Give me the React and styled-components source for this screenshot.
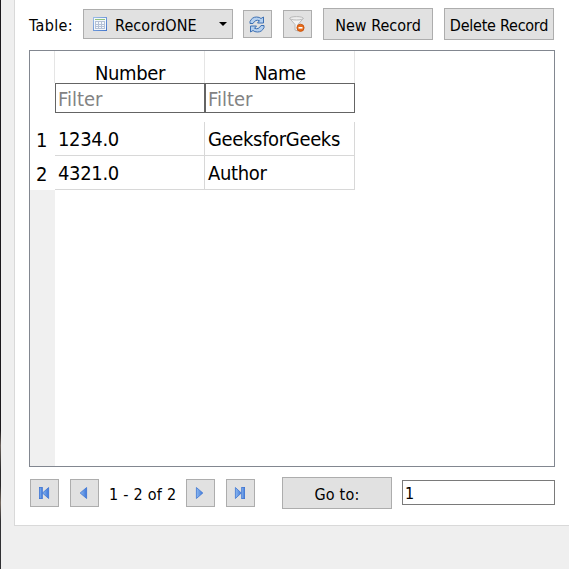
import React from "react";
import styled, { createGlobalStyle } from "styled-components";

const GlobalStyle = createGlobalStyle`
  * { box-sizing: border-box; }
  html, body { margin: 0; padding: 0; overflow: hidden; }
  body {
    background: #efefef;
    color: #000;
    font-family: "DejaVu Sans Condensed", "DejaVu Sans", Tahoma, sans-serif;
    font-stretch: condensed;
  }
`;

const Window = styled.div`
  width: 569px;
  height: 569px;
  padding-left: 13px;
  border-style: solid;
  border-width: 0 0 0 1px;
  border-image: linear-gradient(#1b191c 0 430px, #6b625c 445px, #29282a 470px, #29282a 485px, #75695f 502px, #303033 520px, #303033) 1;
  background: #efefef;
`;

const Panel = styled.main`
  height: 526px;
  padding: 8px 14px 0 14px;
  border-left: 1px solid #d9d9d9;
  border-bottom: 1px solid #d9d9d9;
  background: #fff;
`;

const Toolbar = styled.div`
  display: flex;
  align-items: center;
  height: 32px;
`;

const Text = styled.span`
  display: block;
  white-space: pre;
  font-size: ${(p) => p.$size || 16}px;
  letter-spacing: ${(p) => p.$spacing || 0}px;
  line-height: 1;
`;

const ToolLabel = styled.label`
  width: 54px;
  padding-top: 3px;
`;

const Select = styled.button`
  display: flex;
  align-items: center;
  width: 150px;
  height: 30px;
  margin-right: 10px;
  padding: 3px 5px 0 9px;
  border: 1px solid #adadad;
  background: #e1e1e1;
  font: inherit;
  color: inherit;

  svg { margin-top: -3px; }
  span { flex: 1; margin-left: 8px; text-align: left; }
`;

const IconButton = styled.button`
  display: flex;
  align-items: center;
  justify-content: center;
  width: 29px;
  height: 28px;
  margin-right: 11px;
  padding: 0 1px 0 0;
  border: 1px solid #adadad;
  background: #e1e1e1;
`;

const PushButton = styled.button`
  display: flex;
  align-items: center;
  justify-content: center;
  width: 110px;
  height: 32px;
  margin-right: ${(p) => p.$gap || 0}px;
  padding: 3px 0 0;
  border: 1px solid #adadad;
  background: #e1e1e1;
  font: inherit;
  color: inherit;
`;

const TableFrame = styled.section`
  display: grid;
  grid-template-columns: 25px 1fr;
  width: 526px;
  height: 417px;
  margin-top: 10px;
  border: 1px solid #828790;
`;

const RowHeader = styled.div`
  display: flex;
  flex-direction: column;
  padding-top: 71px;
  background: linear-gradient(#fff 139px, #f0f0f0 139px);
`;

const RowNumber = styled.div`
  height: 34px;
  padding: 8px 0 0 6px;
`;

const Columns = styled.div`
  display: grid;
  grid-template-columns: 150px 150px;
  grid-template-rows: 32px 30px 9px 34px 34px;
`;

const HeaderCell = styled.div`
  display: flex;
  justify-content: center;
  padding: 12px 0 0 1px;
  border-right: 1px solid #e5e5e5;
  box-shadow: -1px 0 #e5e5e5;
`;

const FilterCell = styled.div`
  height: 30px;
  padding: 5px 0 0 2px;
  border: 1px solid #646464;
  color: #838383;
`;

const Spacer = styled.div`
  grid-column: 1 / -1;
`;

const DataCell = styled.div`
  padding: 7px 0 0 3px;
  border-right: 1px solid #d8d8d8;
  border-bottom: 1px solid #d8d8d8;
`;

const Navigation = styled.footer`
  display: flex;
  align-items: center;
  height: 32px;
  margin-top: 10px;
  padding-left: 1px;
`;

const RecordRange = styled.div`
  width: 77px;
  margin-left: -1px;
  padding-top: 3px;
`;

const GoTo = styled.div`
  display: flex;
  align-items: center;
  margin-left: 16px;
`;

const RecordInput = styled.div`
  width: 153px;
  height: 25px;
  margin-bottom: 1px;
  padding: 5px 0 0 2px;
  border: 1px solid #7a7a7a;
`;

const TableIcon = () => (
  <svg width="14" height="14" viewBox="0 0 14 14">
    <defs>
      <linearGradient id="tableFrame" x2="1" y2="1">
        <stop offset="0" stopColor="#9bbce6" />
        <stop offset="1" stopColor="#4577cc" />
      </linearGradient>
    </defs>
    <rect x=".5" y=".5" width="13" height="13" fill="#f4f8fc" stroke="url(#tableFrame)" />
    <path d="M2 2.5h10" stroke="#8fc17c" />
    <path d="M2.5 4.5h9M2.5 7.5h9M2.5 9.5h9M2.5 11.5h9M2.5 4v8M5.5 4v8M8.5 4v8M11.5 4v8" stroke="#b4c1d6" />
  </svg>
);

const RefreshIcon = () => (
  <svg width="16" height="17" viewBox="0 0 16 17">
    <path d="M1 7.5V5.5Q3 1 7.5 1Q10.5 1 12 2.5L14.5 1V7H8.5L10.5 4.7Q6.5 3 4 7.5Z" fill="#b5d0ef" stroke="#3c6fb2" />
    <path d="M15 9.5v2Q13 16 8.5 16Q5.5 16 4 14.5L1.5 16V10H7.5L5.5 12.3Q9.5 14 12 9.5Z" fill="#b5d0ef" stroke="#3c6fb2" />
  </svg>
);

const ClearFilterIcon = () => (
  <svg width="16" height="16" viewBox="0 0 16 16">
    <path d="M.8 2.5L6 8.5V14l3 1V8.5l5.2-6Z" fill="#f3f3f3" stroke="#b8b8b8" />
    <ellipse cx="7.5" cy="2.3" rx="6.8" ry="1.7" fill="#eee" stroke="#b8b8b8" />
    <circle cx="11.5" cy="11.8" r="3.6" fill="#e86c1a" stroke="#c34d08" strokeWidth=".8" />
    <path d="M9.5 11.8h4" stroke="#fff" strokeWidth="1.6" />
  </svg>
);

const ArrowIcon = ({ bar, forward }) => {
  const id = `arrow-${forward ? "next" : "previous"}${bar ? "-end" : ""}`;
  return (
    <svg width="12" height="14" viewBox="0 0 12 14">
      <defs>
        <linearGradient id={id}>
          <stop offset="0" stopColor="#8db9ef" />
          <stop offset="1" stopColor="#3f78da" />
        </linearGradient>
      </defs>
      <g fill={`url(#${id})`} stroke="#3c73d2" strokeWidth=".8">
        {forward
          ? <path d={bar ? "M1.4 1.5V12.5L7.3 7Z" : "M2.4 1.5V12.5L8.8 7Z"} />
          : <path d={bar ? "M10.6 1.5V12.5L4.5 7Z" : "M8.6 1.5V12.5L2.2 7Z"} />}
        {bar && <rect x={forward ? 7.7 : 1.4} y="1.4" width="2.9" height="11.2" />}
      </g>
    </svg>
  );
};

const columns = [
  { title: "Number", values: ["1234.0", "4321.0"] },
  { title: "Name", values: ["GeeksforGeeks", "Author"] },
];

export default function App() {
  return (
    <>
      <GlobalStyle />
      <Window>
        <Panel>
          <Toolbar>
            <ToolLabel><Text $spacing={0.35}>Table:</Text></ToolLabel>
            <Select>
              <TableIcon />
              <Text $spacing={0.1}>RecordONE</Text>
              <svg width="8" height="4" viewBox="0 0 8 4"><path d="M0 0h8L4 4Z" /></svg>
            </Select>
            <IconButton aria-label="Refresh"><RefreshIcon /></IconButton>
            <IconButton aria-label="Clear filters"><ClearFilterIcon /></IconButton>
            <PushButton $gap={11}><Text>New Record</Text></PushButton>
            <PushButton><Text $spacing={-0.25}>Delete Record</Text></PushButton>
          </Toolbar>
          <TableFrame>
            <RowHeader>
              <RowNumber><Text $size={20}>1</Text></RowNumber>
              <RowNumber><Text $size={20}>2</Text></RowNumber>
            </RowHeader>
            <Columns>
              {columns.map((c) => <HeaderCell key={c.title}><Text $size={20} $spacing={-0.35}>{c.title}</Text></HeaderCell>)}
              {columns.map((c) => <FilterCell key={c.title}><Text $size={20}>Filter</Text></FilterCell>)}
              <Spacer />
              {[0, 1].map((row) => columns.map((c) => (
                <DataCell key={`${row}-${c.title}`}>
                  <Text $size={20} $spacing={-0.35}>{c.values[row]}</Text>
                </DataCell>
              )))}
            </Columns>
          </TableFrame>
          <Navigation>
            <IconButton aria-label="First"><ArrowIcon bar /></IconButton>
            <IconButton aria-label="Previous"><ArrowIcon /></IconButton>
            <RecordRange><Text $spacing={0.25}>1 - 2 of 2</Text></RecordRange>
            <IconButton aria-label="Next"><ArrowIcon forward /></IconButton>
            <IconButton aria-label="Last"><ArrowIcon bar forward /></IconButton>
            <GoTo>
              <PushButton $gap={10}><Text $spacing={0.2}>Go to:</Text></PushButton>
              <RecordInput><Text>1</Text></RecordInput>
            </GoTo>
          </Navigation>
        </Panel>
      </Window>
    </>
  );
}
